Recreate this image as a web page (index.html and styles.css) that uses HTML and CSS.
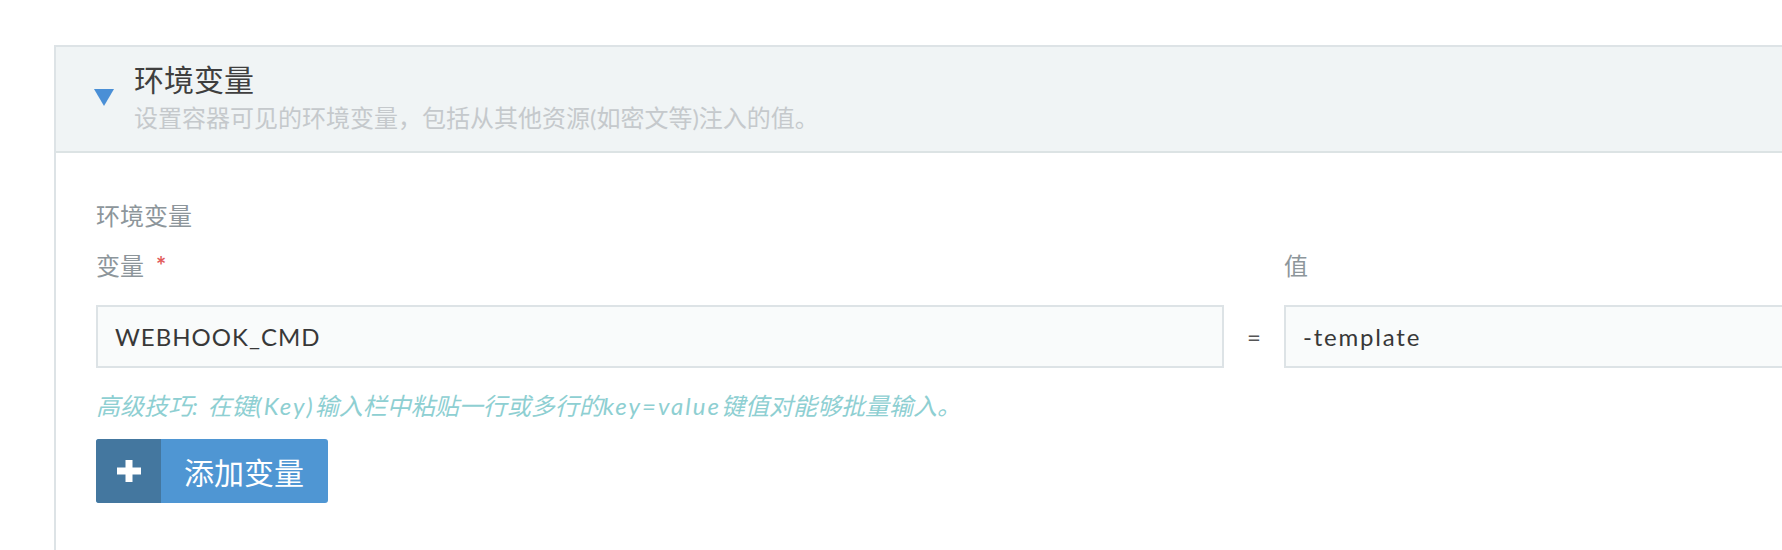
FILE: index.html
```html
<!DOCTYPE html>
<html lang="zh-CN">
<head>
<meta charset="utf-8">
<title>环境变量</title>
<link rel="stylesheet" href="styles.css">
</head>
<body>
<section class="panel">
  <header class="panel-head">
    <svg class="caret" width="20" height="17" viewBox="0 0 20 17"><polygon points="0,0 20,0 10,17" fill="#4a8fd6"/></svg>
    <div class="head-text">
      <div class="title">环境变量</div>
      <div class="subtitle">设置容器可见的环境变量，包括从其他资源(如密文等)注入的值。</div>
    </div>
  </header>
  <div class="panel-body">
    <div class="section-label">环境变量</div>
    <div class="kv-grid">
      <div class="field-label">变量<span class="req">*</span></div>
      <div></div>
      <div class="field-label">值</div>
      <div class="input">WEBHOOK_CMD</div>
      <div class="eq">=</div>
      <div class="input input-value">-template</div>
    </div>
    <div class="hint">高级技巧<span class="lat">: </span>在键<span class="lat">(Key)</span>输入栏中粘贴一行或多行的<span class="lat">key=value</span>键值对能够批量输入。</div>
    <button class="add-btn" type="button">
      <span class="add-icon"><svg width="24" height="22" viewBox="0 0 24 22"><rect x="8.5" y="0" width="7" height="22" fill="#fff"/><rect x="0" y="7.5" width="24" height="7" fill="#fff"/></svg></span>
      <span class="add-text">添加变量</span>
    </button>
  </div>
</section>
</body>
</html>
```
FILE: styles.css
```css
html, body {
  margin: 0;
  padding: 0;
  background: #ffffff;
  overflow: hidden;
}
body {
  font-family: "Lato", "Noto Sans CJK SC", sans-serif;
  color: #333;
  height: 550px;
}
.panel {
  margin: 45px -400px 0 54px;
  border: 2px solid #dde3e6;
  border-bottom: none;
  height: 600px;
}
.panel-head {
  display: flex;
  align-items: center;
  background: #f0f4f5;
  border-bottom: 2px solid #dce3e4;
  padding: 14px 0 18px 38px;
  gap: 20px;
}
.caret {
  display: block;
  flex: none;
}
.title {
  font-size: 30px;
  line-height: 36px;
  color: #3f3f3f;
}
.subtitle {
  margin-top: 6px;
  font-size: 24px;
  line-height: 30px;
  color: #c5c9cc;
}
.panel-body {
  padding: 48px 0 0 40px;
}
.section-label {
  font-size: 24px;
  line-height: 30px;
  color: #8d969b;
}
.kv-grid {
  margin-top: 20px;
  display: grid;
  grid-template-columns: 1128px 60px 1128px;
  row-gap: 24px;
  align-items: center;
}
.field-label {
  font-size: 24px;
  line-height: 30px;
  color: #8d969b;
}
.req {
  margin-left: 12px;
  color: #e25b5b;
  font-size: 24px;
  font-weight: 700;
}
.input {
  box-sizing: border-box;
  height: 63px;
  border: 2px solid #dde3e6;
  background: #f9fbfb;
  padding: 0 17px;
  font-size: 24px;
  line-height: 59px;
  color: #383838;
  letter-spacing: 1px;
}
.input-value {
  letter-spacing: 1.8px;
}
.eq {
  text-align: center;
  font-size: 24px;
  color: #555;
}
.hint {
  margin-top: 23px;
  font-size: 24px;
  line-height: 30px;
  font-style: italic;
  color: #8ecfd2;
}
.lat {
  letter-spacing: 2px;
}
.add-btn {
  margin-top: 18px;
  display: flex;
  align-items: stretch;
  height: 64px;
  padding: 0;
  border: none;
  border-radius: 3px;
  overflow: hidden;
  background: #4f96d3;
  font-family: inherit;
  cursor: pointer;
}
.add-icon {
  width: 65px;
  background: #44779f;
  display: flex;
  align-items: center;
  justify-content: center;
}
.add-icon svg {
  display: block;
}
.add-text {
  display: flex;
  align-items: center;
  padding: 0 24px 0 23px;
  font-size: 30px;
  color: #fff;
}
```
